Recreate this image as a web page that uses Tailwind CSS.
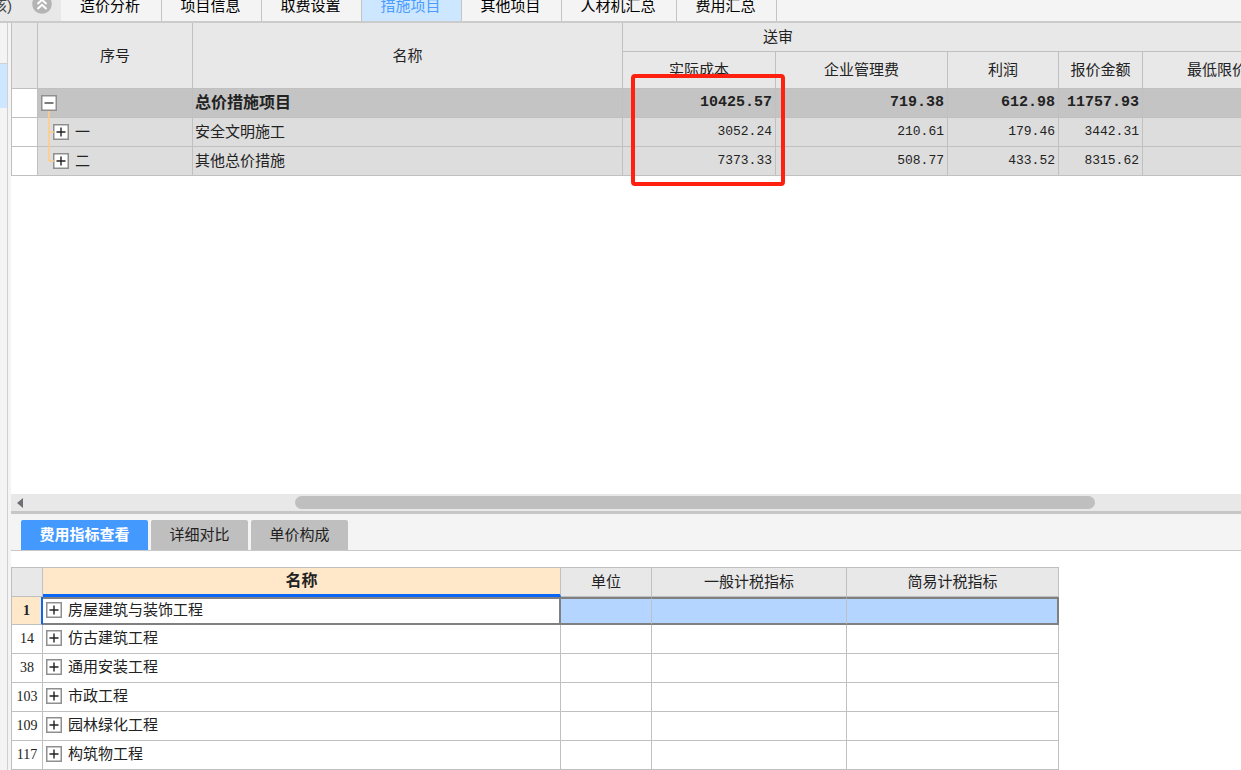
<!DOCTYPE html>
<html lang="zh-CN">
<head>
<meta charset="utf-8">
<meta name="viewport" content="width=device-width, initial-scale=1">
<title>措施项目</title>
<script src="https://cdn.jsdelivr.net/npm/@tailwindcss/browser@4"></script>
</head>
<body class="flex h-screen flex-col overflow-hidden bg-[#f4f4f4] font-['Liberation_Sans','Noto_Sans_CJK_SC',sans-serif] text-[15px] leading-5 text-[#222]">

<svg class="hidden" aria-hidden="true">
  <symbol id="plus" viewBox="0 0 16 16"><rect x="0.75" y="0.75" width="14.5" height="14.5" fill="#fff" stroke="#8f8f8f" stroke-width="1.5"/><path d="M3.5 8h9M8 3.5v9" stroke="#222" stroke-width="1.4"/></symbol>
  <symbol id="minus" viewBox="0 0 16 16"><rect x="0.75" y="0.75" width="14.5" height="14.5" fill="#fff" stroke="#8f8f8f" stroke-width="1.5"/><path d="M3.5 8h9" stroke="#444" stroke-width="1.4"/></symbol>
</svg>

<!-- Page tabs -->
<header class="flex h-[23px] shrink-0 items-end overflow-hidden border-b-2 border-[#cbcbcb]">
  <div class="flex h-[30px] w-[61px] shrink-0 items-center justify-between bg-[#e8e8e8] pr-[9px]">
    <span class="flex w-3 justify-end whitespace-nowrap text-[#444]">核)</span>
    <button aria-label="收起" class="mb-1 size-5">
      <svg viewBox="0 0 20 20" class="size-5"><circle cx="10" cy="10" r="9.8" fill="#b4b4b4"/><path d="M5.5 10 10 5.8l4.500 4.200M5.500 15 10 10.800l4.500 4.200" fill="none" stroke="#fff" stroke-width="2"/></svg>
    </button>
  </div>
  <nav class="flex h-[30px] shrink-0 text-black">
    <button class="w-[101px] border-r border-[#c4c4c4] pr-0.5">造价分析</button>
    <button class="w-[100px] border-r border-[#c4c4c4] pr-0.5">项目信息</button>
    <button class="w-[100px] border-r border-[#c4c4c4] pr-0.5">取费设置</button>
    <button class="w-[100px] border-r border-[#c4c4c4] bg-[#cce7ff] pr-0.5 text-[#4b9cff]">措施项目</button>
    <button class="w-[100px] border-r border-[#c4c4c4] pr-0.5">其他项目</button>
    <button class="w-[115px] border-r border-[#c4c4c4] pr-0.5">人材机汇总</button>
    <button class="w-[100px] border-r border-[#c4c4c4] pr-0.5">费用汇总</button>
  </nav>
</header>

<div class="flex min-h-0 flex-1">
  <!-- Collapsed side tree -->
  <aside class="w-2 shrink-0 border-r border-[#d0d0d0] pt-10">
    <div class="h-[45px] border-t border-[#d0d0d0] bg-[#cce7ff]"></div>
  </aside>

  <main class="ml-[3px] flex min-w-0 flex-1 flex-col bg-white">
    <section class="relative min-h-0 flex-1 overflow-hidden">
      <table class="w-full table-fixed border-separate border-spacing-0 border-l border-[#c0c0c0] whitespace-nowrap [&_td]:border-r [&_td]:border-b [&_td]:border-[#c0c0c0] [&_th]:border-r [&_th]:border-b [&_th]:border-[#c0c0c0] [&_th]:font-normal [&_tr>:last-child]:border-r-0">
        <colgroup>
          <col class="w-[26px]"><col class="w-[155px]"><col class="w-[430px]"><col class="w-[153px]"><col class="w-[172px]"><col class="w-[111px]"><col class="w-[84px]"><col>
        </colgroup>
        <thead class="bg-[#e8e8e8]">
          <tr class="h-[29px]">
            <th rowspan="2"></th>
            <th rowspan="2">序号</th>
            <th rowspan="2">名称</th>
            <th colspan="5" class="pl-[140px] text-left">送审</th>
          </tr>
          <tr class="h-[37px]">
            <th>实际成本</th>
            <th>企业管理费</th>
            <th>利润</th>
            <th>报价金额</th>
            <th class="overflow-hidden pl-11 text-left">最低限价</th>
          </tr>
        </thead>
        <tbody class="bg-[#dddddd]">
          <tr class="h-[29px] bg-[#c4c4c4] font-bold">
            <td class="bg-white"></td>
            <td class="relative pl-[3px]">
              <button aria-label="折叠" class="block size-4"><svg class="size-4"><use href="#minus"/></svg></button>
              <svg class="absolute top-[22px] left-2.5 h-[52px] w-2" viewBox="0 0 8 52"><path d="M1 0v50M1 21h5M1 50h5" fill="none" stroke="#ffcb86" stroke-width="1.5"/></svg>
            </td>
            <td class="pl-0.5 text-base leading-5">总价措施项目</td>
            <td class="pr-[3px] text-right font-['Liberation_Mono',monospace]">10425.57</td>
            <td class="pr-[3px] text-right font-['Liberation_Mono',monospace]">719.38</td>
            <td class="pr-[3px] text-right font-['Liberation_Mono',monospace]">612.98</td>
            <td class="pr-[3px] text-right font-['Liberation_Mono',monospace]">11757.93</td>
            <td></td>
          </tr>
          <tr class="h-[29px]">
            <td class="bg-white"></td>
            <td class="pl-[15px]"><div class="flex items-center gap-1.5"><button aria-label="展开" class="size-4"><svg class="size-4"><use href="#plus"/></svg></button>一</div></td>
            <td class="pl-0.5">安全文明施工</td>
            <td class="pr-[3px] text-right font-['Liberation_Mono',monospace] text-[13px]">3052.24</td>
            <td class="pr-[3px] text-right font-['Liberation_Mono',monospace] text-[13px]">210.61</td>
            <td class="pr-[3px] text-right font-['Liberation_Mono',monospace] text-[13px]">179.46</td>
            <td class="pr-[3px] text-right font-['Liberation_Mono',monospace] text-[13px]">3442.31</td>
            <td></td>
          </tr>
          <tr class="h-[29px]">
            <td class="bg-white"></td>
            <td class="pl-[15px]"><div class="flex items-center gap-1.5"><button aria-label="展开" class="size-4"><svg class="size-4"><use href="#plus"/></svg></button>二</div></td>
            <td class="pl-0.5">其他总价措施</td>
            <td class="pr-[3px] text-right font-['Liberation_Mono',monospace] text-[13px]">7373.33</td>
            <td class="pr-[3px] text-right font-['Liberation_Mono',monospace] text-[13px]">508.77</td>
            <td class="pr-[3px] text-right font-['Liberation_Mono',monospace] text-[13px]">433.52</td>
            <td class="pr-[3px] text-right font-['Liberation_Mono',monospace] text-[13px]">8315.62</td>
            <td></td>
          </tr>
        </tbody>
      </table>
      <!-- Highlight frame over the cost column -->
      <div class="absolute top-[51px] left-[620px] h-[112px] w-[154px] rounded border-4 border-[#ff2010]"></div>
    </section>

    <div class="flex h-5 shrink-0 items-center border-b-[3px] border-[#c6c6c6] bg-[#e8e8e8]">
      <button aria-label="向左滚动" class="w-4 shrink-0 pl-1.5"><svg viewBox="0 0 6 12" class="h-3 w-1.5"><path d="M6 1v10L0 6z" fill="#6e6e74"/></svg></button>
      <div class="ml-[268px] h-[13px] w-[65%] rounded-full bg-[#bfbfbf]"></div>
    </div>

    <section class="shrink-0">
      <nav class="flex h-[37px] items-end gap-[3px] border-b border-[#c8c8c8] bg-[#f4f4f4] pl-2.5">
        <button class="h-[30px] w-[127px] rounded-t-xs bg-[#4499ff] font-bold text-white">费用指标查看</button>
        <button class="h-[30px] w-[97px] rounded-t-xs bg-[#bfbfbf]">详细对比</button>
        <button class="h-[30px] w-[97px] rounded-t-xs bg-[#bfbfbf]">单价构成</button>
      </nav>
      <div class="pt-4">
        <table class="w-[1048px] table-fixed border-separate border-spacing-0 border-t border-l border-[#c0c0c0] whitespace-nowrap [&_td]:border-r [&_td]:border-b [&_td]:border-[#c0c0c0] [&_th]:border-r [&_th]:border-b [&_th]:border-[#c0c0c0] [&_th]:font-normal">
          <colgroup><col class="w-[31px]"><col class="w-[518px]"><col class="w-[91px]"><col class="w-[195px]"><col></colgroup>
          <thead class="bg-[#e8e8e8]">
            <tr class="h-[29px]">
              <th></th>
              <th class="border-b-[3px]! border-b-[#0a66f5]! bg-[#ffe7ca] text-base leading-5 font-bold!">名称</th>
              <th>单位</th>
              <th>一般计税指标</th>
              <th>简易计税指标</th>
            </tr>
          </thead>
          <tbody>
            <tr class="h-7">
              <td class="border-r-2! border-r-[#0a66f5]! bg-[#ffe7ca] text-center font-['Liberation_Serif',serif] text-sm leading-5 font-bold">1</td>
              <td class="border-y-2! border-r-2! border-[#808080]! pb-0.5 pl-[3px]"><div class="flex items-center gap-1.5"><button aria-label="展开" class="size-4"><svg class="size-4"><use href="#plus"/></svg></button>房屋建筑与装饰工程</div></td>
              <td class="border-y-2! border-y-[#808080]! bg-[#b4d5ff]"></td>
              <td class="border-y-2! border-y-[#808080]! bg-[#b4d5ff]"></td>
              <td class="border-y-2! border-r-2! border-[#808080]! bg-[#b4d5ff]"></td>
            </tr>
            <tr class="h-[29px]"><td class="text-center font-['Liberation_Serif',serif] text-sm leading-5">14</td><td class="pb-0.5 pl-[3px]"><div class="flex items-center gap-1.5"><button aria-label="展开" class="size-4"><svg class="size-4"><use href="#plus"/></svg></button>仿古建筑工程</div></td><td></td><td></td><td></td></tr>
            <tr class="h-[29px]"><td class="text-center font-['Liberation_Serif',serif] text-sm leading-5">38</td><td class="pb-0.5 pl-[3px]"><div class="flex items-center gap-1.5"><button aria-label="展开" class="size-4"><svg class="size-4"><use href="#plus"/></svg></button>通用安装工程</div></td><td></td><td></td><td></td></tr>
            <tr class="h-[29px]"><td class="text-center font-['Liberation_Serif',serif] text-sm leading-5">103</td><td class="pb-0.5 pl-[3px]"><div class="flex items-center gap-1.5"><button aria-label="展开" class="size-4"><svg class="size-4"><use href="#plus"/></svg></button>市政工程</div></td><td></td><td></td><td></td></tr>
            <tr class="h-[29px]"><td class="text-center font-['Liberation_Serif',serif] text-sm leading-5">109</td><td class="pb-0.5 pl-[3px]"><div class="flex items-center gap-1.5"><button aria-label="展开" class="size-4"><svg class="size-4"><use href="#plus"/></svg></button>园林绿化工程</div></td><td></td><td></td><td></td></tr>
            <tr class="h-[29px]"><td class="text-center font-['Liberation_Serif',serif] text-sm leading-5">117</td><td class="pb-0.5 pl-[3px]"><div class="flex items-center gap-1.5"><button aria-label="展开" class="size-4"><svg class="size-4"><use href="#plus"/></svg></button>构筑物工程</div></td><td></td><td></td><td></td></tr>
          </tbody>
        </table>
      </div>
    </section>
  </main>
</div>
</body>
</html>
